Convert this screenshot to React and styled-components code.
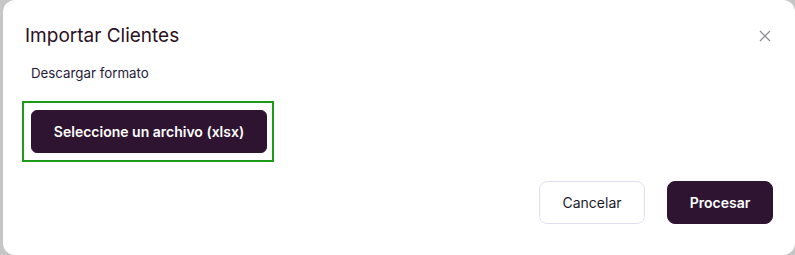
import React from 'react';
import styled, { createGlobalStyle } from 'styled-components';

const GlobalStyle = createGlobalStyle`
  html, body {
    margin: 0;
    padding: 0;
    background: #c6c6c6;
    font-family: Inter, "Noto Sans", sans-serif;
    overflow: hidden;
  }
`;

const Backdrop = styled.div`
  width: 795px;
  height: 255px;
  padding-left: 3px;
  box-sizing: border-box;
  display: flex;
`;

const Dialog = styled.div`
  flex: 1;
  background: #fff;
  border-radius: 12px;
  box-sizing: border-box;
  padding: 24px 22px 31px 19px;
  display: flex;
  flex-direction: column;
`;

const Header = styled.div`
  display: flex;
  align-items: center;
  justify-content: space-between;
  height: 22px;
`;

const Title = styled.h2`
  margin: 0 0 0 3px;
  font-size: 19px;
  font-weight: 400;
  color: #2a1024;
  letter-spacing: 0;
`;

const Close = styled.button`
  border: 0;
  background: none;
  padding: 0;
  width: 12px;
  height: 12px;
  margin-right: 2px;
  margin-top: 2px;
  display: flex;
  cursor: pointer;
`;

const Link = styled.span`
  margin: 19px 0 0 9px;
  font-size: 13.3px;
  color: #1f1a3a;
`;

const UploadFrame = styled.div`
  margin-top: 20px;
  width: 252px;
  border: 2px solid #1e9b1a;
  box-sizing: border-box;
  padding: 7px;
`;

const Button = styled.button`
  height: 43px;
  border-radius: ${p => (p.$wide ? '6px' : '8px')};
  border: 1px solid ${p => (p.$light ? '#e4def4' : '#2e1430')};
  background: ${p => (p.$light ? '#fff' : '#2e1430')};
  color: ${p => (p.$light ? '#1a1a2a' : '#fff')};
  font-family: Inter, "Noto Sans", sans-serif;
  font-size: 14px;
  font-weight: ${p => (p.$light ? 400 : 600)};
  width: ${p => p.$w}px;
  box-sizing: border-box;
  cursor: pointer;
`;

const Footer = styled.div`
  margin-top: auto;
  display: flex;
  justify-content: flex-end;
  gap: 22px;
`;

export default function App() {
  return (
    <>
      <GlobalStyle />
      <Backdrop>
        <Dialog>
          <Header>
            <Title>Importar Clientes</Title>
            <Close aria-label="Cerrar">
              <svg width="12" height="12" viewBox="0 0 12 12">
                <path d="M1 1L11 11M11 1L1 11" stroke="#8a8a96" strokeWidth="1.2" />
              </svg>
            </Close>
          </Header>
          <Link>Descargar formato</Link>
          <UploadFrame>
            <Button $wide $w={236}>Seleccione un archivo (xlsx)</Button>
          </UploadFrame>
          <Footer>
            <Button $light $w={106}>Cancelar</Button>
            <Button $w={106}>Procesar</Button>
          </Footer>
        </Dialog>
      </Backdrop>
    </>
  );
}
